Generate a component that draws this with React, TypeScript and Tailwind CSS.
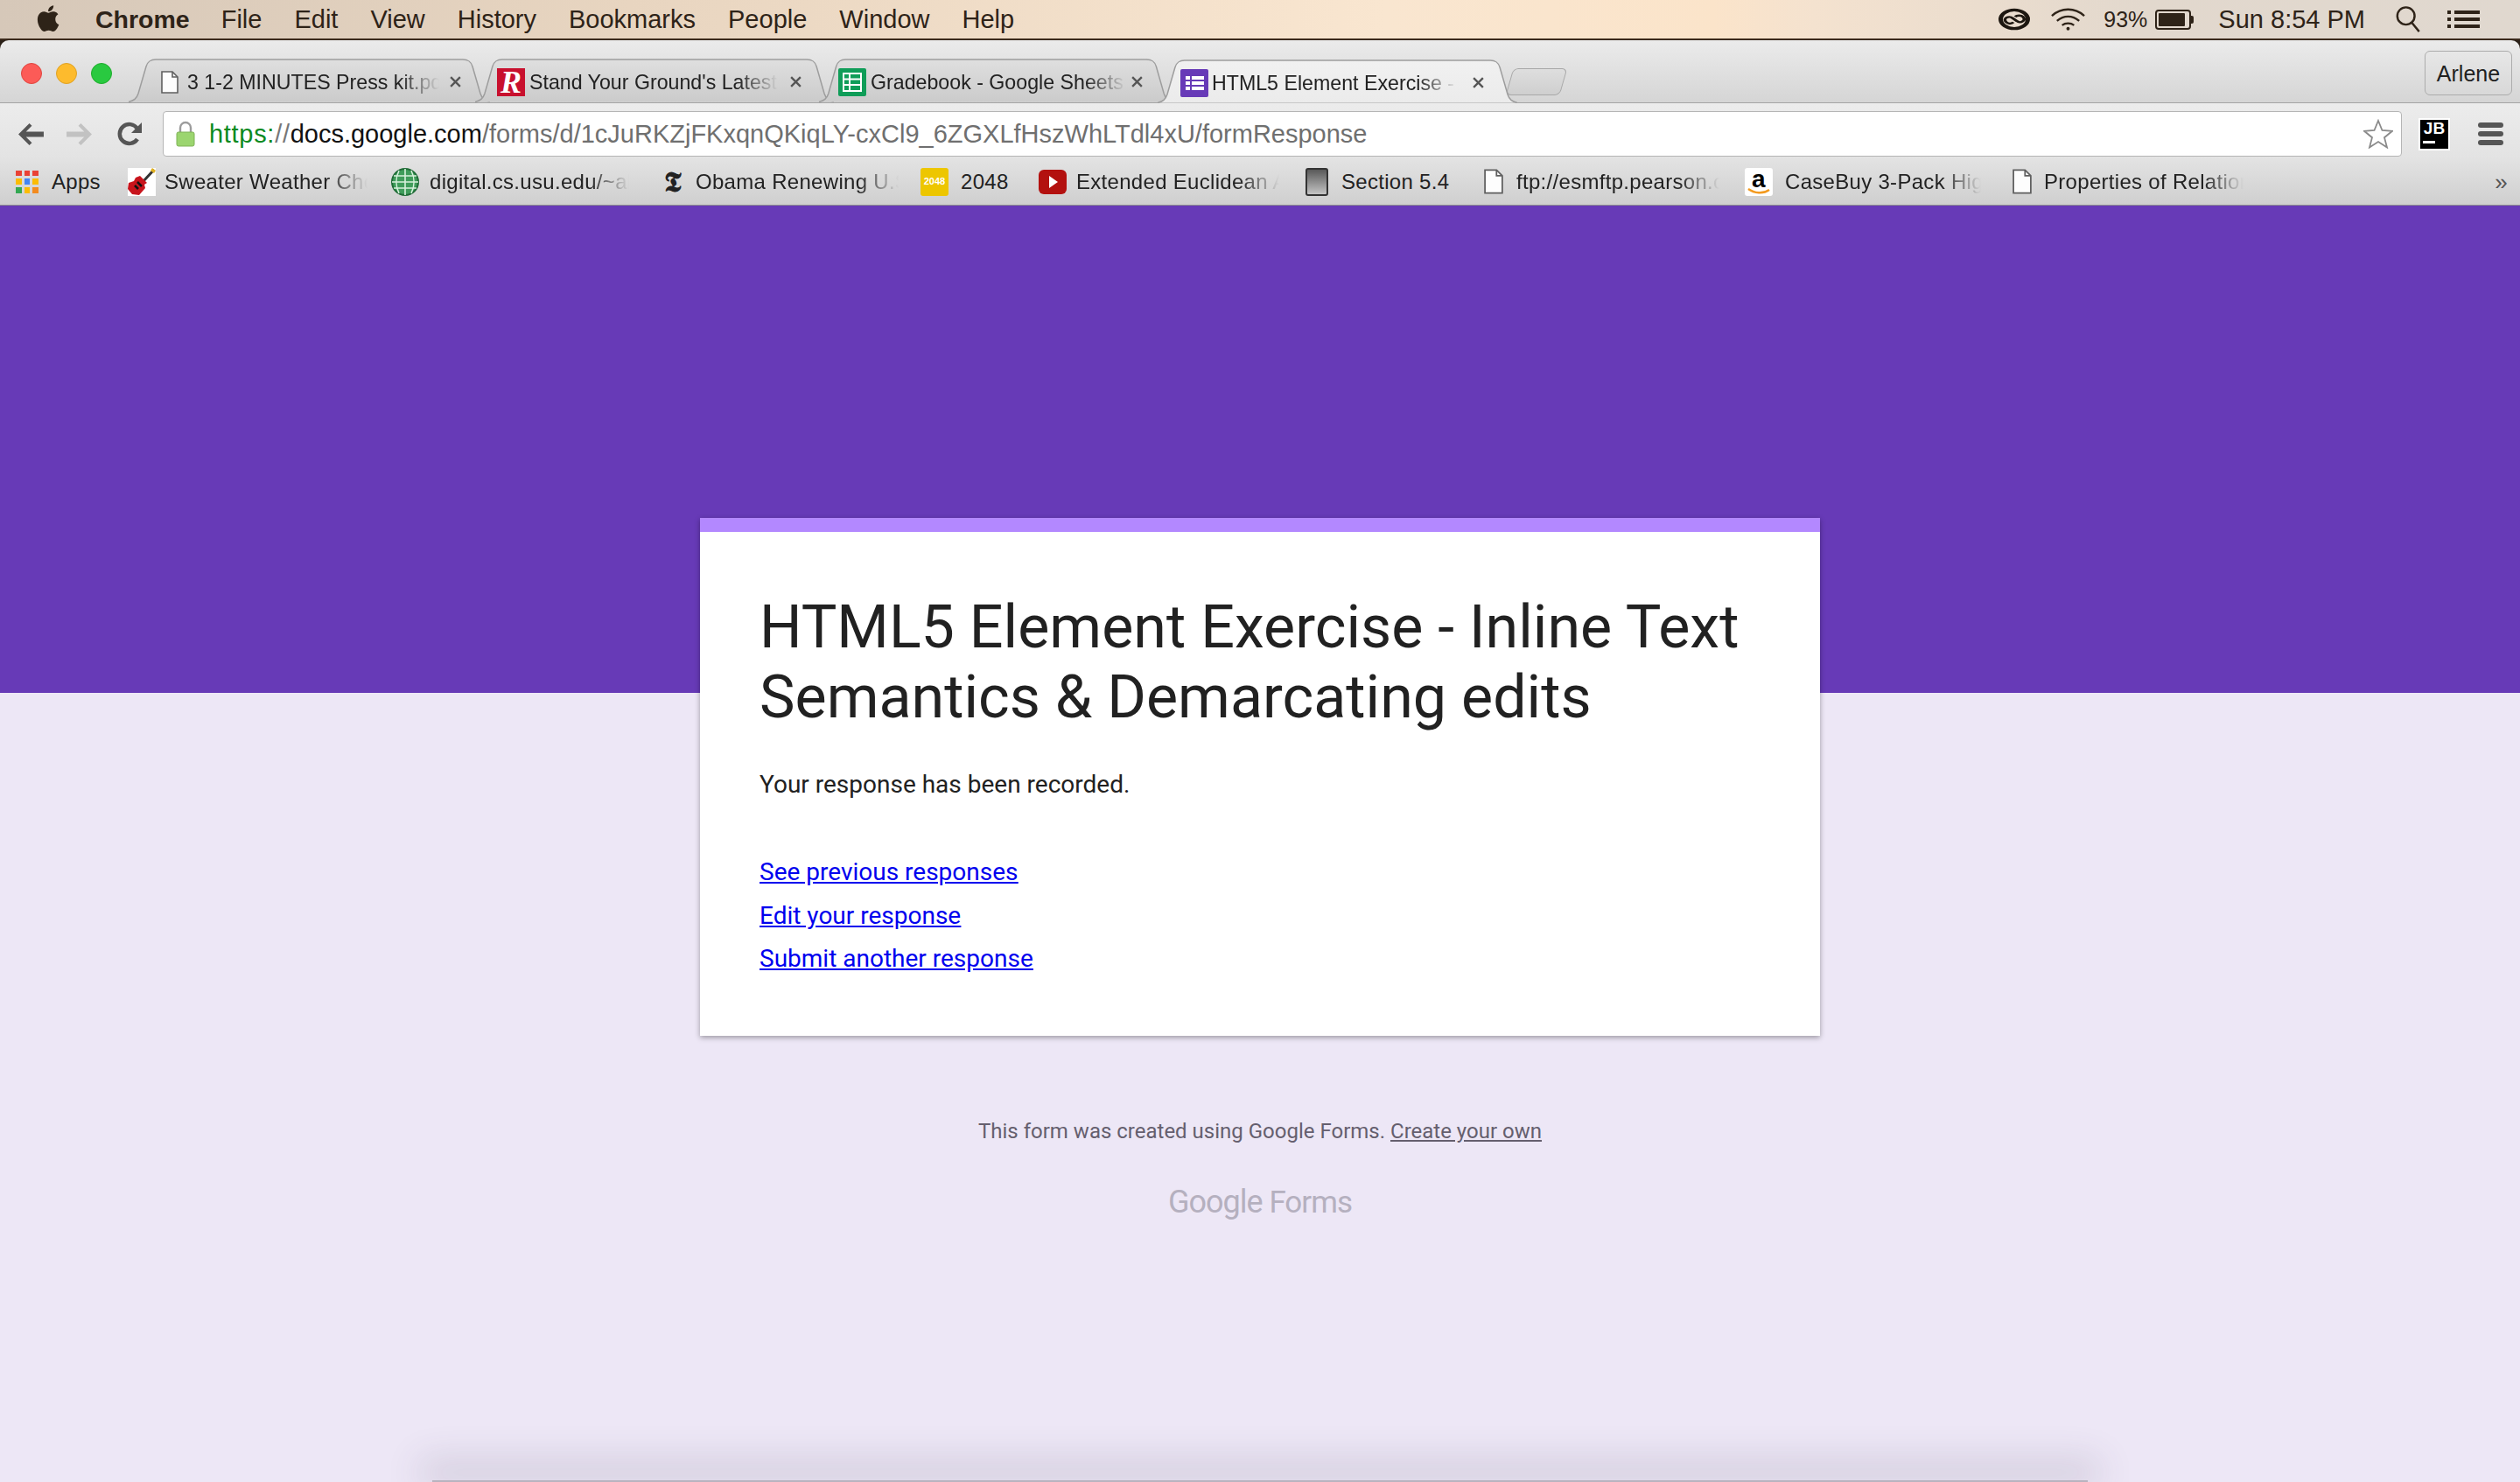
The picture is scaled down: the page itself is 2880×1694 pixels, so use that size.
import type { ReactNode } from "react";

const MENUS = ["File", "Edit", "View", "History", "Bookmarks", "People", "Window", "Help"];

function DocIcon({ className }: { className?: string }) {
  return (
    <svg viewBox="0 0 20 26" className={className} fill="#fdfdfd" stroke="#5f5f5f" strokeWidth="1.6">
      <path d="M1 1h12l6 6v18H1z" />
      <path d="M13 1v6h6" fill="none" />
    </svg>
  );
}

function RutgersIcon() {
  return (
    <div className="w-8 h-8 bg-[#c8102e] flex items-center justify-center shrink-0 overflow-hidden">
      <span className="font-['Liberation_Serif'] font-bold italic text-white text-[36px] leading-none">R</span>
    </div>
  );
}

function SheetsIcon() {
  return (
    <svg viewBox="0 0 32 32" className="w-8 h-8 shrink-0">
      <rect width="32" height="32" rx="2" fill="#0f9d58" />
      <path d="M6 6h20v20H6zM6 12.500h20M6 19h20M13 6v20" fill="none" stroke="#fff" strokeWidth="2" />
    </svg>
  );
}

function FormsIcon() {
  return (
    <svg viewBox="0 0 32 32" className="w-8 h-8 shrink-0">
      <rect width="32" height="32" rx="2" fill="#673ab7" />
      <path d="M6 8h5v4H6zM6 14h5v4H6zM6 20h5v4H6zM13 8h14v4H13zM13 14h14v4H13zM13 20h14v4H13z" fill="#fff" />
    </svg>
  );
}

function TabShape({ active }: { active?: boolean }) {
  const id = active ? "tabA" : "tabI";
  return (
    <svg viewBox="0 0 413 50" preserveAspectRatio="none" className="absolute inset-0 w-full h-full">
      <defs>
        <linearGradient id={id} x1="0" y1="0" x2="0" y2="1">
          <stop offset="0" stopColor={active ? "#f1f1f1" : "#dfdfdf"} />
          <stop offset="1" stopColor={active ? "#ebebeb" : "#cbcbcb"} />
        </linearGradient>
      </defs>
      <path
        d="M0 49.5C6 48 9 46 11 40L20 9C22 3 25 1 31 1H382C388 1 391 3 393 9L402 40C404 46 407 48 413 49.5"
        fill={`url(#${id})`}
        stroke="#9d9d9d"
        strokeWidth="1.5"
      />
    </svg>
  );
}

function Tab({ icon, label, textW, gap, pl, w, ml, closeR, active }: {
  icon: ReactNode;
  label: string;
  textW: string;
  gap: string;
  pl: string;
  w: string;
  ml: string;
  closeR: string;
  active?: boolean;
}) {
  return (
    <div className={`relative h-[50px] shrink-0 flex items-center ${w} ${ml} ${pl} ${active ? "z-10 -mb-px" : ""}`}>
      <TabShape active={active} />
      <div className="relative flex items-center h-full pt-[4px] w-full">
        {icon}
        <span
          className={`${gap} whitespace-nowrap overflow-hidden text-[23.2px] leading-[30px] text-[#222] ${textW} [mask-image:linear-gradient(to_right,black_84%,transparent)]`}
        >
          {label}
        </span>
        <span className={`absolute ${closeR} top-[19px] text-[#555]`}>
          <svg viewBox="0 0 14 14" className="w-[15px] h-[15px]" stroke="currentColor" strokeWidth="2.2">
            <path d="M2 2l10 10M12 2L2 12" />
          </svg>
        </span>
      </div>
    </div>
  );
}

function Guitar() {
  return (
    <svg viewBox="0 0 32 32" className="w-8 h-8">
      <rect width="32" height="32" fill="#fff" />
      <path d="M30 2L18 15" stroke="#333" strokeWidth="3" />
      <path d="M28 0l4 3-2 3-4-3z" fill="#e0b020" />
      <path d="M14 9l8 8-3 2 1 4-7 8-8-1-5-6 1-7 6-2 2-4z" fill="#c8141c" />
      <path d="M11 16l5 5M8 20l4 4" stroke="#111" strokeWidth="2.6" />
    </svg>
  );
}

function Globe() {
  return (
    <svg viewBox="0 0 32 32" className="w-8 h-8" fill="none">
      <circle cx="16" cy="16" r="15" fill="#3f9c5a" stroke="#1f6b36" strokeWidth="2" />
      <path d="M1 16h30M3 9h26M3 23h26M16 1v30M9 3c-4 8-4 18 0 26M23 3c4 8 4 18 0 26" stroke="#d7f0dc" strokeWidth="1.6" />
    </svg>
  );
}

function NytIcon() {
  return (
    <div className="w-8 h-8 flex items-center justify-center">
      <span className="font-['DejaVu_Serif','DejaVu_Sans',serif] font-bold text-[32px] leading-none text-[#222]">𝕿</span>
    </div>
  );
}

function Icon2048() {
  return (
    <div className="w-8 h-8 rounded-[3px] bg-[#edc600] flex items-center justify-center">
      <span className="font-['Liberation_Sans'] font-bold text-[11px] tracking-normal text-white">2048</span>
    </div>
  );
}

function YouTube() {
  return (
    <svg viewBox="0 0 32 32" className="w-8 h-8">
      <rect y="2" width="32" height="28" rx="6" fill="#b3110f" />
      <path d="M12 9l10 7-10 7z" fill="#fff" />
    </svg>
  );
}

function TabletIcon() {
  return (
    <svg viewBox="0 0 26 32" className="w-[26px] h-8">
      <defs>
        <linearGradient id="tabletFill" x1="0" y1="0" x2="0" y2="1">
          <stop offset="0" stopColor="#555" />
          <stop offset="1" stopColor="#c8c8c8" />
        </linearGradient>
      </defs>
      <rect x="1" y="1" width="24" height="30" rx="2" fill="url(#tabletFill)" stroke="#333" strokeWidth="2" />
    </svg>
  );
}

function AmazonIcon() {
  return (
    <div className="relative w-8 h-8 rounded-[3px] bg-white flex justify-center overflow-hidden">
      <span className="font-['Liberation_Sans'] font-bold text-[28px] leading-[26px] text-black">a</span>
      <svg viewBox="0 0 32 10" className="absolute bottom-0 left-0 w-8 h-[10px]" fill="none" stroke="#f39a1f" strokeWidth="2.4">
        <path d="M4 2c7 5 17 6 24 1" />
      </svg>
    </div>
  );
}

function AppsIcon() {
  const colors = ["#e94235", "#e94235", "#e94235", "#fbbc05", "#4285f4", "#fbbc05", "#34a853", "#fbbc05", "#f28b20"];
  return (
    <div className="grid grid-cols-3 gap-[3px] w-[26px] h-[26px]">
      {colors.map((c, i) => (
        <div key={i} style={{ backgroundColor: c }} />
      ))}
    </div>
  );
}

const BOOKMARKS: { icon: ReactNode; label: string; textW: string; gap: string; ml: string; fade?: boolean }[] = [
  { icon: <AppsIcon />, label: "Apps", textW: "w-[56px]", gap: "ml-[15px]", ml: "ml-0" },
  { icon: <Guitar />, label: "Sweater Weather Chords", textW: "w-[232px]", gap: "ml-[10px]", ml: "ml-[31px]", fade: true },
  { icon: <Globe />, label: "digital.cs.usu.edu/~alan", textW: "w-[228px]", gap: "ml-[12px]", ml: "ml-[27px]", fade: true },
  { icon: <NytIcon />, label: "Obama Renewing U.S.", textW: "w-[232px]", gap: "ml-[10px]", ml: "ml-[34px]", fade: true },
  { icon: <Icon2048 />, label: "2048", textW: "w-[60px]", gap: "ml-[14px]", ml: "ml-[25px]" },
  { icon: <YouTube />, label: "Extended Euclidean Algorithm", textW: "w-[232px]", gap: "ml-[11px]", ml: "ml-[29px]", fade: true },
  { icon: <TabletIcon />, label: "Section 5.4", textW: "w-[128px]", gap: "ml-[15px]", ml: "ml-[30px]" },
  { icon: <DocIcon className="w-[22px] h-[29px]" />, label: "ftp://esmftp.pearson.com", textW: "w-[232px]", gap: "ml-[15px]", ml: "ml-[35px]", fade: true },
  { icon: <AmazonIcon />, label: "CaseBuy 3-Pack High", textW: "w-[224px]", gap: "ml-[14px]", ml: "ml-[29px]", fade: true },
  { icon: <DocIcon className="w-[22px] h-[29px]" />, label: "Properties of Relations", textW: "w-[228px]", gap: "ml-[14px]", ml: "ml-[36px]", fade: true },
];

function MenuBar() {
  return (
    <div className="h-[46px] shrink-0 border-b-2 border-[#3b2a1c] bg-[linear-gradient(to_right,#d6c8b9_0%,#e8d5c0_25%,#f9e6d0_55%,#fbe4ca_68%,#f4e2cf_72%,#e2d8cd_85%,#e0d8cf_100%)] flex items-center text-[#2e2318] text-[29px] leading-none">
      <svg viewBox="0 0 170 200" className="ml-[42px] w-[26px] h-[30px] mb-[3px]" fill="#2e2318">
        <path d="M140 106c0-25 20-37 21-38-12-17-30-19-36-19-15-2-30 9-38 9s-20-9-33-9c-17 0-33 10-41 25-18 31-5 76 12 101 8 12 18 26 31 25 13 0 17-8 33-8s20 8 33 8 23-12 31-24c10-14 14-28 14-29-1 0-27-10-27-41zM116 33c7-8 11-20 10-32-10 0-22 7-30 15-6 7-12 19-10 31 11 1 23-6 30-14z" />
      </svg>
      <span className="ml-[41px] font-bold text-[28.5px]">Chrome</span>
      <div className="ml-[36px] flex gap-[37px]">
        {MENUS.map((m) => (
          <span key={m}>{m}</span>
        ))}
      </div>
      <div className="ml-auto flex items-center">
        <svg viewBox="0 0 38 38" preserveAspectRatio="none" className="w-[38px] h-[26px]" fill="none" stroke="#1d1710" strokeWidth="5">
          <circle cx="19" cy="19" r="15.5" />
          <path d="M10 24c-5-6 3-12 7-7l5 5c4 5 11-1 7-7-2-3-7-3-9 0M18 24c-2 3-6 3-8 0" strokeWidth="3.5" />
        </svg>
        <svg viewBox="0 0 42 26" className="ml-[22px] w-[41px] h-[26px]" fill="none" stroke="#2e2318" strokeWidth="2.4">
          <path d="M2 9c11-10 27-10 38 0M8 15c8-7 18-7 26 0M14 20c4-3 10-3 14 0" />
          <circle cx="21" cy="24" r="2" fill="#2e2318" stroke="none" />
        </svg>
        <span className="ml-[20px] text-[25px]">93%</span>
        <div className="ml-[9px] flex items-center">
          <div className="w-[41px] h-[23px] rounded-[4px] border-2 border-[#2e2318] p-[2px]">
            <div className="w-[90%] h-full bg-[#2e2318] rounded-[1px]" />
          </div>
          <div className="w-[3px] h-[9px] bg-[#2e2318] rounded-r-[2px]" />
        </div>
        <span className="ml-[28px]">Sun 8:54 PM</span>
        <svg viewBox="0 0 32 34" className="ml-[34px] w-[31px] h-[32px]" fill="none" stroke="#2e2318" strokeWidth="2.6">
          <circle cx="13" cy="13" r="10.5" />
          <path d="M20 21l9 11" />
        </svg>
        <svg viewBox="0 0 37 20" className="ml-[29px] mr-[46px] w-[37px] h-[20px]" fill="#2e2318">
          <path d="M0 0h4v4H0zM8 0h29v4H8zM0 8h4v4H0zM8 8h29v4H8zM0 16h4v4H0zM8 16h29v4H8z" />
        </svg>
      </div>
    </div>
  );
}

function TabStrip() {
  return (
    <div className="h-[72px] shrink-0 bg-[linear-gradient(#ebebeb,#d5d5d5)] rounded-t-[10px] flex items-end relative border-b border-[#a3a3a3]">
      <div className="absolute left-[24px] top-[26px] flex gap-[16px]">
        <div className="w-6 h-6 rounded-full bg-[#fc5b57] border border-[#e0443e]" />
        <div className="w-6 h-6 rounded-full bg-[#fdbb2d] border border-[#dfa123]" />
        <div className="w-6 h-6 rounded-full bg-[#29c940] border border-[#1dad2b]" />
      </div>
      <div className="flex items-end ml-[147px] h-full">
        <Tab icon={<DocIcon className="w-[20px] h-[26px] shrink-0" />} label="3 1-2 MINUTES Press kit.pdf" textW="w-[288px]" gap="ml-[10px]" pl="pl-[37px]" w="w-[413px]" ml="ml-0" closeR="right-[32px]" />
        <Tab icon={<RutgersIcon />} label="Stand Your Ground's Latest Victim" textW="w-[284px]" gap="ml-[5px]" pl="pl-[25px]" w="w-[410px]" ml="-ml-[17px]" closeR="right-[36px]" />
        <Tab icon={<SheetsIcon />} label="Gradebook - Google Sheets" textW="w-[292px]" gap="ml-[5px]" pl="pl-[22px]" w="w-[405px]" ml="-ml-[17px]" closeR="right-[34px]" />
        <Tab icon={<FormsIcon />} label="HTML5 Element Exercise - Inline" textW="w-[280px]" gap="ml-[4px]" pl="pl-[26px]" w="w-[411px]" ml="-ml-[18px]" closeR="right-[37px]" active />
        <div className="w-[62px] h-[31px] ml-[-9px] mb-[8px] -skew-x-[16deg] rounded-[6px] border border-[#a8a8a8] bg-[linear-gradient(#dedede,#cfcfcf)]" />
      </div>
      <div className="absolute right-[9px] top-[12px] w-[100px] h-[51px] pt-[2px] rounded-[6px] border border-[#acacac] flex items-center justify-center text-[25px] text-[#222]">
        Arlene
      </div>
    </div>
  );
}

function Toolbar() {
  return (
    <div className="h-[62px] shrink-0 pt-[9px] pb-px bg-[linear-gradient(#ececec,#e3e3e3)] flex items-center">
      <svg viewBox="0 0 32 28" className="ml-[20px] w-[31px] h-[27px]" fill="#555">
        <path d="M14 1L1 14l13 13 3-3-7-7h21v-6H10l7-7z" />
      </svg>
      <svg viewBox="0 0 32 28" className="ml-[24px] w-[31px] h-[27px]" fill="#c2c2c2">
        <path d="M18 1l13 13-13 13-3-3 7-7H1v-6h21l-7-7z" />
      </svg>
      <svg viewBox="0 0 30 30" className="ml-[27px] w-[30px] h-[30px]" fill="none" stroke="#555" strokeWidth="4.5">
        <path d="M24 21a11 11 0 1 1 0-12" />
        <path d="M29 2v12H17z" fill="#555" stroke="none" />
      </svg>
      <div className="ml-[23px] h-[52px] w-[2559px] rounded-[4px] border border-[#b5b5b5] bg-white flex items-center">
        <svg viewBox="0 0 22 30" className="ml-[14px] w-[22px] h-[30px]">
          <path d="M5 14V8a6 6 0 0 1 12 0v6" fill="none" stroke="#9c9c9c" strokeWidth="2.4" />
          <rect x="1" y="13" width="20" height="16" rx="2" fill="#9bd56f" stroke="#7fb357" />
        </svg>
        <span className="ml-[16px] text-[29px] leading-none whitespace-nowrap">
          <span className="text-[#0b8a1f] tracking-[0.7px]">https:</span>
          <span className="text-[#777] tracking-[0.7px]">//</span>
          <span className="text-[#111]">docs.google.com</span>
          <span className="text-[#6f6f6f]">/forms/d/1cJuRKZjFKxqnQKiqLY-cxCl9_6ZGXLfHszWhLTdl4xU/formResponse</span>
        </span>
        <svg viewBox="0 0 34 34" className="ml-auto mr-[9px] w-[34px] h-[34px]" fill="#fff" stroke="#8a8a8a" strokeWidth="1.8">
          <path d="M17 2l4.500 11 11.500.8-9 7.400 3 11.300L17 26l-10 6.500 3-11.300-9-7.400L12.500 13z" />
        </svg>
      </div>
      <div className="ml-[19px] w-[36px] h-[37px] bg-black border-2 border-white flex flex-col px-[3px]">
        <span className="font-bold text-[19px] leading-[19px] text-white text-center">JB</span>
        <div className="mt-[5px] w-[14px] h-[3px] bg-white" />
      </div>
      <div className="ml-[32px] flex flex-col gap-[4px]">
        <div className="w-[29px] h-[6px] rounded-[3px] bg-[#555]" />
        <div className="w-[29px] h-[6px] rounded-[3px] bg-[#555]" />
        <div className="w-[29px] h-[6px] rounded-[3px] bg-[#555]" />
      </div>
    </div>
  );
}

function BookmarksBar() {
  return (
    <div className="h-[55px] shrink-0 pt-px bg-[linear-gradient(#e3e3e3,#cfcfcf)] flex items-center pl-[18px] text-[24px] tracking-[0.3px] text-[#222] border-b border-[#8f8f8f]">
      {BOOKMARKS.map((b) => (
        <div key={b.label} className={`flex items-center shrink-0 ${b.ml}`}>
          {b.icon}
          <span
            className={`${b.gap} ${b.textW} whitespace-nowrap overflow-hidden leading-[30px] ${
              b.fade ? "[mask-image:linear-gradient(to_right,black_80%,transparent)]" : ""
            }`}
          >
            {b.label}
          </span>
        </div>
      ))}
      <span className="ml-auto mr-[14px] text-[26px] text-[#555] leading-none">»</span>
    </div>
  );
}

export default function App() {
  return (
    <div className="h-[1694px] w-[2880px] overflow-hidden flex flex-col bg-[#2a2018] font-['Liberation_Sans',sans-serif]">
      <MenuBar />
      <TabStrip />
      <Toolbar />
      <BookmarksBar />
      <main className="flex-1 flex flex-col bg-[linear-gradient(#673ab7_0,#673ab7_557px,#ede7f6_557px)] font-['Roboto',sans-serif]">
        <div className="mt-[357px] mx-auto w-[1280px] h-[592px] bg-white border-t-[16px] border-[#b388ff] shadow-[0_2px_6px_rgba(0,0,0,0.35)] px-[68px] pt-[69px]">
          <h1 className="text-[68.2px] leading-[80px] text-[#212121] font-normal">
            HTML5 Element Exercise - Inline Text Semantics &amp; Demarcating edits
          </h1>
          <p className="mt-[40px] text-[28px] leading-[40px] text-[#212121]">Your response has been recorded.</p>
          <div className="mt-[60px] flex flex-col items-start gap-[9.6px] text-[28px] leading-[40px] text-[#0000ee] underline">
            <a href="#">See previous responses</a>
            <a href="#">Edit your response</a>
            <a href="#">Submit another response</a>
          </div>
        </div>
        <p className="mt-[92px] text-center text-[24px] leading-[34px] text-[#655f6e]">
          This form was created using Google Forms. <a href="#" className="underline">Create your own</a>
        </p>
        <div className="mt-[42px] text-center text-[35px] leading-[44px] tracking-[-1px] text-[#b5b0bf]">
          <span className="text-[36px]">Google</span> <span>Forms</span>
        </div>
        <div className="mt-auto mx-[494px] h-[2px] bg-[#b8b3bf] shadow-[0_-10px_40px_14px_rgba(70,60,90,0.16)]" />
      </main>
    </div>
  );
}
